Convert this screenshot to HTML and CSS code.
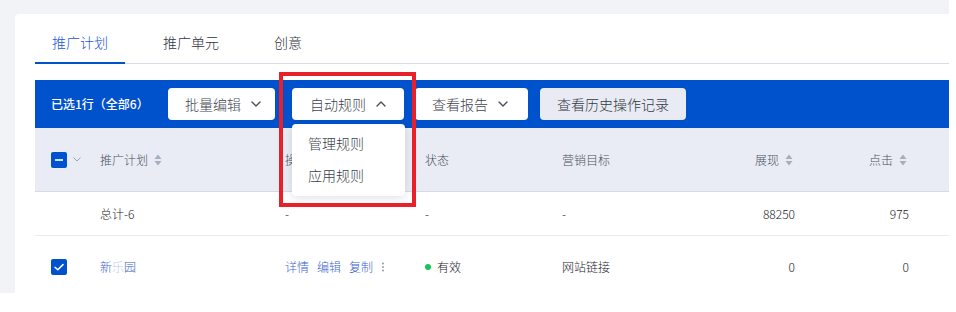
FILE: index.html
```html
<!DOCTYPE html>
<html lang="zh-CN">
<head>
<meta charset="utf-8">
<title>推广计划</title>
<link rel="stylesheet" href="styles.css">
</head>
<body>
<div class="screen">
  <div class="card">
    <nav class="tabs">
      <div class="tab active">推广计划</div>
      <div class="tab">推广单元</div>
      <div class="tab">创意</div>
    </nav>

    <div class="toolbar">
      <div class="sel-info">已选1行（全部6）</div>
      <button class="btn btn-1">批量编辑<svg class="chev" width="10" height="6" viewBox="0 0 10 6"><path d="M1 1l4 4 4-4" fill="none" stroke="#4a4f5a" stroke-width="1.4" stroke-linecap="round" stroke-linejoin="round"/></svg></button>
      <button class="btn btn-2">自动规则<svg class="chev" width="10" height="6" viewBox="0 0 10 6"><path d="M1 5l4-4 4 4" fill="none" stroke="#4a4f5a" stroke-width="1.4" stroke-linecap="round" stroke-linejoin="round"/></svg></button>
      <button class="btn btn-3">查看报告<svg class="chev" width="10" height="6" viewBox="0 0 10 6"><path d="M1 1l4 4 4-4" fill="none" stroke="#4a4f5a" stroke-width="1.4" stroke-linecap="round" stroke-linejoin="round"/></svg></button>
      <button class="btn btn-gray">查看历史操作记录</button>
    </div>

    <div class="table">
      <div class="row head">
        <div class="cell c0">
          <span class="checkbox"><svg width="16" height="16" viewBox="0 0 16 16"><path d="M4 8h8" stroke="#fff" stroke-width="1.6"/></svg></span>
          <svg class="mini-chev" width="8" height="5" viewBox="0 0 8 5"><path d="M0.5 0.5l3.5 3.5 3.5-3.5" fill="none" stroke="#9aa1af" stroke-width="1"/></svg>
        </div>
        <div class="cell">推广计划<svg class="sort" width="8" height="12" viewBox="0 0 8 12"><path d="M4 0.5L7.5 5H0.5z M4 11.5L0.5 7h7z" fill="#a7aebc"/></svg></div>
        <div class="cell">操作</div>
        <div class="cell">状态</div>
        <div class="cell">营销目标</div>
        <div class="cell right">展现<svg class="sort" width="8" height="12" viewBox="0 0 8 12"><path d="M4 0.5L7.5 5H0.5z M4 11.5L0.5 7h7z" fill="#a7aebc"/></svg></div>
        <div class="cell right">点击<svg class="sort" width="8" height="12" viewBox="0 0 8 12"><path d="M4 0.5L7.5 5H0.5z M4 11.5L0.5 7h7z" fill="#a7aebc"/></svg></div>
        <div class="cell"></div>
      </div>

      <div class="row total">
        <div class="cell c0"></div>
        <div class="cell">总计-6</div>
        <div class="cell">-</div>
        <div class="cell">-</div>
        <div class="cell">-</div>
        <div class="cell right">88250</div>
        <div class="cell right">975</div>
        <div class="cell"></div>
      </div>

      <div class="row item">
        <div class="cell c0">
          <span class="checkbox"><svg width="16" height="16" viewBox="0 0 16 16"><path d="M4 8.2l2.8 2.6L12 5.6" fill="none" stroke="#fff" stroke-width="1.5" stroke-linecap="round" stroke-linejoin="round"/></svg></span>
        </div>
        <div class="cell name">新<span class="faint">乐</span>园</div>
        <div class="cell ops">
          <a class="link">详情</a><a class="link">编辑</a><a class="link">复制</a>
          <svg class="more" width="4" height="10" viewBox="0 0 4 10"><circle cx="2" cy="1.5" r="0.9" fill="#8a909c"/><circle cx="2" cy="5" r="0.9" fill="#8a909c"/><circle cx="2" cy="8.5" r="0.9" fill="#8a909c"/></svg>
        </div>
        <div class="cell"><span class="dot"></span>有效</div>
        <div class="cell">网站链接</div>
        <div class="cell right">0</div>
        <div class="cell right">0</div>
        <div class="cell"></div>
      </div>
    </div>

    <div class="dropdown">
      <div class="dd-item">管理规则</div>
      <div class="dd-item">应用规则</div>
    </div>
    <div class="highlight"></div>
  </div>
</div>
</body>
</html>
```

FILE: styles.css
```css
* { box-sizing: border-box; }

html, body {
  margin: 0;
  padding: 0;
  background: #ffffff;
  font-family: "Noto Sans CJK SC", "Noto Sans", sans-serif;
  font-weight: 300;
}

.screen {
  width: 949px;
  height: 293px;
  background: #f2f3f7;
  padding: 14px 0 0 15px;
  overflow: hidden;
}

.card {
  position: relative;
  width: 934px;
  height: 279px;
  background: #ffffff;
  border-top-left-radius: 4px;
  padding: 8px 0 0 20px;
}

/* tabs */
.tabs {
  display: flex;
  gap: 21px;
  border-bottom: 1px solid #d9dce5;
}

.tab {
  padding: 9px 17px;
  line-height: 22px;
  font-size: 14px;
  color: #2f3440;
  border-bottom: 2px solid transparent;
  margin-bottom: -1px;
}

.tab.active {
  color: #2357d4;
  border-bottom-color: #0052cc;
}

/* toolbar */
.toolbar {
  margin-top: 16px;
  height: 48px;
  background: #0052cc;
  display: flex;
  align-items: center;
  padding-left: 16px;
}

.sel-info {
  width: 117px;
  color: #ffffff;
  font-size: 12px;
  font-weight: 500;
  line-height: 20px;
  white-space: nowrap;
}

.btn {
  height: 32px;
  border: none;
  border-radius: 4px;
  background: #ffffff;
  font-family: inherit;
  font-weight: 300;
  font-size: 14px;
  color: #40454f;
  display: flex;
  align-items: center;
  gap: 10px;
  line-height: 20px;
  white-space: nowrap;
  cursor: pointer;
}

.btn-1 { padding: 0 14px 0 17px; }
.btn-2 { padding: 0 18px 0 18px; margin-left: 17px; }
.btn-3 { padding: 0 20px 0 17px; margin-left: 11px; }
.btn-gray {
  padding: 0 17px;
  margin-left: 12px;
  background: #e8ebf3;
  color: #333842;
}

.chev { display: block; flex: none; }

/* table */
.table {
  font-size: 12px;
  color: #1d2129;
}

.row {
  display: grid;
  grid-template-columns: 49px 185px 140px 137px 154px 111px 114px 1fr;
  align-items: center;
}

.row.head {
  height: 64px;
  background: #e9ecf4;
  border-bottom: 1px solid #d6dae3;
  color: #4a505e;
}

.row.total {
  height: 44px;
  border-bottom: 1px solid #e8eaef;
}

.row.item {
  height: 62px;
}

.cell {
  padding: 0 16px;
  display: flex;
  align-items: center;
  line-height: 18px;
  white-space: nowrap;
}

.cell.right { justify-content: flex-end; }

.cell.c0 {
  padding-right: 0;
  gap: 6px;
}

.checkbox {
  width: 16px;
  height: 16px;
  border-radius: 2px;
  background: #0052cc;
  display: block;
  flex: none;
}

.checkbox svg { display: block; }

.mini-chev { display: block; }

.sort {
  display: block;
  margin-left: 6px;
  flex: none;
}

.row.head .cell.right .sort { margin-right: 2px; }

.name { color: #3a5fc8; }
.faint { opacity: 0.35; }

.ops { gap: 8px; }

.link {
  color: #3a63cf;
  text-decoration: none;
}

.more { display: block; margin-left: 0; }

.dot {
  width: 6px;
  height: 6px;
  border-radius: 50%;
  background: #19c25a;
  margin-right: 6px;
  flex: none;
}

/* overlays */
.dropdown {
  position: absolute;
  left: 277px;
  top: 110px;
  width: 113px;
  padding: 3px 0 5px;
  background: #ffffff;
  border-radius: 4px;
  box-shadow: 0 2px 8px rgba(30, 40, 60, 0.14);
}

.dd-item {
  height: 32px;
  line-height: 32px;
  padding-left: 16px;
  font-size: 14px;
  color: #3a3f4a;
}

.highlight {
  position: absolute;
  left: 264px;
  top: 58px;
  width: 137px;
  height: 135px;
  border: 4px solid #e8202a;
  pointer-events: none;
}
```
